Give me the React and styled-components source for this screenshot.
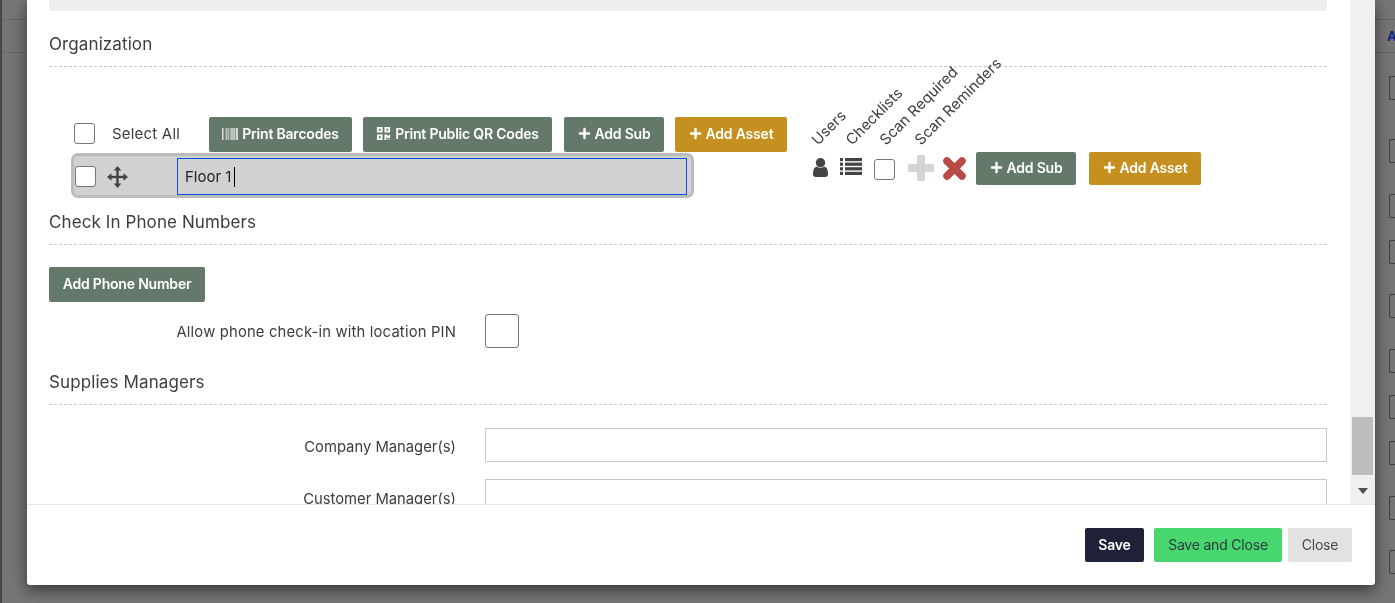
import React from "react";
import styled, { createGlobalStyle } from "styled-components";
import { FaPlus, FaBarcode, FaQrcode } from "react-icons/fa";

const Global = createGlobalStyle`
  html, body { margin: 0; height: 100%; overflow: hidden; background: #757575; }
  * { box-sizing: border-box; }
  body { font-family: Inter, "Liberation Sans", sans-serif; color: #3d3d3d; }
`;

const Backdrop = styled.div`
  height: 603px;
  padding-top: 19px;
  background: #757575;
  border-left: 2px solid #3f4a4a;
`;
const BackBand = styled.div`
  height: 34px;
  border-top: 1px solid #666;
  border-bottom: 1px solid #666;
  display: flex;
  justify-content: flex-end;
  align-items: center;
  color: #14248a;
  font-weight: 700;
  font-size: 13px;
  span { width: 8px; overflow: hidden; }
`;
const BackBoxes = styled.div`
  display: flex;
  flex-direction: column;
  align-items: flex-end;
`;
const BackBox = styled.div`
  width: 6.5px;
  height: 24px;
  margin-top: ${(p) => p.$mt}px;
  border: 1px solid #3f3f3f;
  border-right: none;
  border-radius: 2px 0 0 2px;
`;

const Modal = styled.div`
  position: fixed;
  left: 27px;
  top: 0;
  width: 1348px;
  height: 585px;
  background: #fff;
  display: flex;
  flex-direction: column;
  border-radius: 0 0 3px 3px;
  box-shadow: 0 5px 15px rgba(0, 0, 0, 0.55);
`;
const Body = styled.div`
  height: 504px;
  flex: none;
  display: flex;
  overflow: hidden;
`;
const Content = styled.div`
  width: 1323px;
  padding: 0 23px 0 22px;
`;
const Strip = styled.div`
  height: 11px;
  background: #eeeeee;
`;
const Section = styled.div`
  height: ${(p) => p.$h}px;
  display: flex;
  align-items: flex-end;
  padding-bottom: 12px;
  border-bottom: 1px dashed #c9c9c9;
  font-size: 17px;
  line-height: 20px;
  letter-spacing: 0.1px;
  color: #3d3d3d;
`;
const OrgArea = styled.div`
  display: flex;
  align-items: flex-end;
  padding: 50px 0 0 22px;
`;
const TreeColumn = styled.div`
  width: 739px;
  flex: none;
`;
const ToolRow = styled.div`
  height: 35px;
  display: flex;
  align-items: flex-start;
  padding-left: 3px;
`;
const Check = styled.span`
  display: block;
  flex: none;
  width: ${(p) => p.$size || 21}px;
  height: ${(p) => p.$size || 21}px;
  margin-top: ${(p) => p.$mt || 0}px;
  margin-left: ${(p) => p.$ml || 0}px;
  background: #fff;
  border: 1px solid #767676;
  border-radius: 3px;
`;
const SelectLabel = styled.span`
  width: 114px;
  flex: none;
  padding-left: 17px;
  font-size: 15px;
  line-height: 33px;
  letter-spacing: 0.2px;
  white-space: nowrap;
`;
const Btn = styled.button`
  height: ${(p) => p.$h || 35}px;
  width: ${(p) => p.$w}px;
  flex: none;
  margin-left: ${(p) => p.$ml || 0}px;
  padding: 0 0 2px;
  display: inline-flex;
  align-items: center;
  justify-content: center;
  gap: 4px;
  font-family: Inter, "Liberation Sans", sans-serif;
  font-size: 14px;
  font-weight: ${(p) => (p.$plain ? 400 : 600)};
  letter-spacing: -0.2px;
  color: ${(p) => p.$fg || "#fff"};
  background: ${(p) => p.$bg || "#65796b"};
  border: none;
  border-radius: 2px;
  white-space: nowrap;
  svg { font-size: ${(p) => p.$icon || 13}px; }
`;
const TreeRow = styled.div`
  width: 623px;
  height: 45px;
  margin-top: 1px;
  display: flex;
  align-items: center;
  padding: 2px 4px 0 1px;
  background: #d1d1d1;
  border: 3px solid #bcbcbc;
  border-radius: 7px;
`;
const MoveSvg = styled.svg`
  width: 21px;
  height: 22px;
  margin: 0 49px 0 11px;
  flex: none;
  fill: #444;
`;
const NameField = styled.div`
  flex: 1;
  height: 37px;
  display: flex;
  align-items: center;
  padding-left: 7px;
  border: 1px solid #0b50e6;
  font-size: 15px;
  color: #222;
`;
const Caret = styled.span`
  width: 1px;
  height: 20px;
  margin-left: 3px;
  background: #000;
`;
const RightColumn = styled.div`
  display: flex;
  flex-direction: column;
  padding-bottom: 13px;
`;
const Heads = styled.div`
  display: flex;
  height: 22px;
  padding-left: 10px;
`;
const Head = styled.div`
  width: 0;
  margin-right: ${(p) => p.$gap}px;
  position: relative;
`;
const HeadText = styled.span`
  position: absolute;
  left: 0;
  bottom: 4px;
  font-family: Inter, sans-serif;
  font-size: 15px;
  line-height: 16px;
  color: #3d3d3d;
  white-space: nowrap;
  transform-origin: left bottom;
  transform: rotate(-45deg);
`;
const Actions = styled.div`
  display: flex;
  align-items: flex-start;
  height: 33px;
  padding-left: 3px;
`;
const Glyph = styled.svg`
  flex: none;
  width: ${(p) => p.$w}px;
  height: ${(p) => p.$h}px;
  margin-top: ${(p) => p.$mt}px;
  margin-left: ${(p) => p.$ml || 0}px;
  fill: ${(p) => p.$c};
`;
const PhoneArea = styled.div`
  padding-top: 22px;
`;
const FormRow = styled.div`
  display: flex;
  align-items: center;
  margin-top: ${(p) => p.$mt}px;
`;
const FormLabel = styled.label`
  width: 407px;
  flex: none;
  padding-top: ${(p) => p.$pt}px;
  text-align: right;
  font-size: 14.8px;
  letter-spacing: ${(p) => p.$spread || 0}px;
  margin-right: 29px;
`;
const TextInput = styled.div`
  flex: 1;
  height: 34px;
  border: 1px solid #c9c9c9;
`;
const Scrollbar = styled.div`
  width: 25px;
  flex: none;
  background: #f0f0f0;
  display: flex;
  flex-direction: column;
  align-items: center;
  justify-content: flex-end;
  padding-bottom: 10px;
`;
const Thumb = styled.div`
  width: 21px;
  height: 58px;
  margin-bottom: 13px;
  background: #bdbdbd;
`;
const Arrow = styled.div`
  width: 0;
  height: 0;
  border-left: 5.5px solid transparent;
  border-right: 5.5px solid transparent;
  border-top: 6px solid #505050;
`;
const Footer = styled.div`
  flex: 1;
  border-top: 1px solid #e5e5e5;
  display: flex;
  justify-content: flex-end;
  align-items: flex-start;
  padding: 23px 23px 0 0;
`;

const heads = [
  ["Users", 34],
  ["Checklists", 34],
  ["Scan Required", 35],
  ["Scan Reminders", 0],
];
const boxGaps = [23, 39, 31, 22, 30, 31, 22, 22, 31, 30];

const UserGlyph = () => (
  <Glyph $w={15} $h={19} $mt={6} $c="#444" viewBox="0 0 15 19">
    <circle cx="7.5" cy="4.8" r="4.7" />
    <path d="M0 15.5C0 11.5 1.6 9 3.8 8.6c1 .9 2.3 1.4 3.7 1.4s2.7-.5 3.7-1.4C13.4 9 15 11.5 15 15.500v1C15 18 14 19 12.500 19h-10C1 19 0 18 0 16.500z" />
  </Glyph>
);
const ListGlyph = () => (
  <Glyph $w={22} $h={17} $mt={6} $ml={12} $c="#444" viewBox="0 0 22 17">
    {[0, 4.6, 9.2, 13.8].map((y) => (
      <g key={y}>
        <rect x="0" y={y} width="3" height="3.2" />
        <rect x="5" y={y} width="17" height="3.2" />
      </g>
    ))}
  </Glyph>
);
const PlusGlyph = () => (
  <Glyph $w={26} $h={26} $mt={3} $ml={13} $c="#d4d4d4" viewBox="0 0 26 26">
    <rect x="9" y="0" width="8" height="26" rx="1.5" />
    <rect x="0" y="9" width="26" height="8" rx="1.500" />
  </Glyph>
);
const CrossGlyph = () => (
  <Glyph $w={23} $h={23} $mt={5} $ml={9} $c="#b94a48" viewBox="0 0 23 23">
    <path d="M4 4l15 15M19 4L4 19" stroke="#b94a48" strokeWidth="7.500" strokeLinecap="round" fill="none" />
  </Glyph>
);

export default function App() {
  return (
    <>
      <Global />
      <Backdrop>
        <BackBand><span>A</span></BackBand>
        <BackBoxes>
          {boxGaps.map((g, i) => <BackBox key={i} $mt={g} />)}
        </BackBoxes>
      </Backdrop>
      <Modal>
        <Body>
          <Content>
            <Strip />
            <Section $h={56}>Organization</Section>
            <OrgArea>
              <TreeColumn>
                <ToolRow>
                  <Check $mt={6} />
                  <SelectLabel>Select All</SelectLabel>
                  <Btn $w={143} $icon={16}><FaBarcode />Print Barcodes</Btn>
                  <Btn $w={189} $ml={11} $icon={15}><FaQrcode />Print Public QR Codes</Btn>
                  <Btn $w={100} $ml={12}><FaPlus />Add Sub</Btn>
                  <Btn $w={112} $ml={11} $bg="#c5901f"><FaPlus />Add Asset</Btn>
                </ToolRow>
                <TreeRow>
                  <Check />
                  <MoveSvg viewBox="0 0 21 22">
                    <rect x="9.300" y="3" width="2.400" height="16" />
                    <rect x="3" y="9.800" width="15" height="2.400" />
                    <path d="M10.500 0l3.800 4.500H6.700zM10.500 22l3.800-4.500H6.700zM0 11l4.500-3.800v7.600zM21 11l-4.500-3.800v7.600z" />
                  </MoveSvg>
                  <NameField>Floor 1<Caret /></NameField>
                </TreeRow>
              </TreeColumn>
              <RightColumn>
                <Heads>
                  {heads.map(([t, g]) => (
                    <Head key={t} $gap={g}><HeadText>{t}</HeadText></Head>
                  ))}
                </Heads>
                <Actions>
                  <UserGlyph />
                  <ListGlyph />
                  <Check $mt={7} $ml={12} />
                  <PlusGlyph />
                  <CrossGlyph />
                  <Btn $w={100} $h={33} $ml={10}><FaPlus />Add Sub</Btn>
                  <Btn $w={112} $h={33} $ml={13} $bg="#c5901f"><FaPlus />Add Asset</Btn>
                </Actions>
              </RightColumn>
            </OrgArea>
            <Section $h={47}>Check In Phone Numbers</Section>
            <PhoneArea>
              <Btn $w={156}>Add Phone Number</Btn>
              <FormRow $mt={12}>
                <FormLabel $pt={2} $spread={0.17}>Allow phone check-in with location PIN</FormLabel>
                <Check $size={34} />
              </FormRow>
            </PhoneArea>
            <Section $h={57}>Supplies Managers</Section>
            <FormRow $mt={23}>
              <FormLabel $pt={3}>Company Manager(s)</FormLabel>
              <TextInput />
            </FormRow>
            <FormRow $mt={17}>
              <FormLabel $pt={5}>Customer Manager(s)</FormLabel>
              <TextInput />
            </FormRow>
          </Content>
          <Scrollbar>
            <Thumb />
            <Arrow />
          </Scrollbar>
        </Body>
        <Footer>
          <Btn $w={59} $h={34} $bg="#1f2139">Save</Btn>
          <Btn $w={128} $h={34} $ml={10} $bg="#48d66f" $fg="#2d3d3d" $plain>Save and Close</Btn>
          <Btn $w={64} $h={34} $ml={6} $bg="#e2e2e2" $fg="#4a4a4a" $plain>Close</Btn>
        </Footer>
      </Modal>
    </>
  );
}
